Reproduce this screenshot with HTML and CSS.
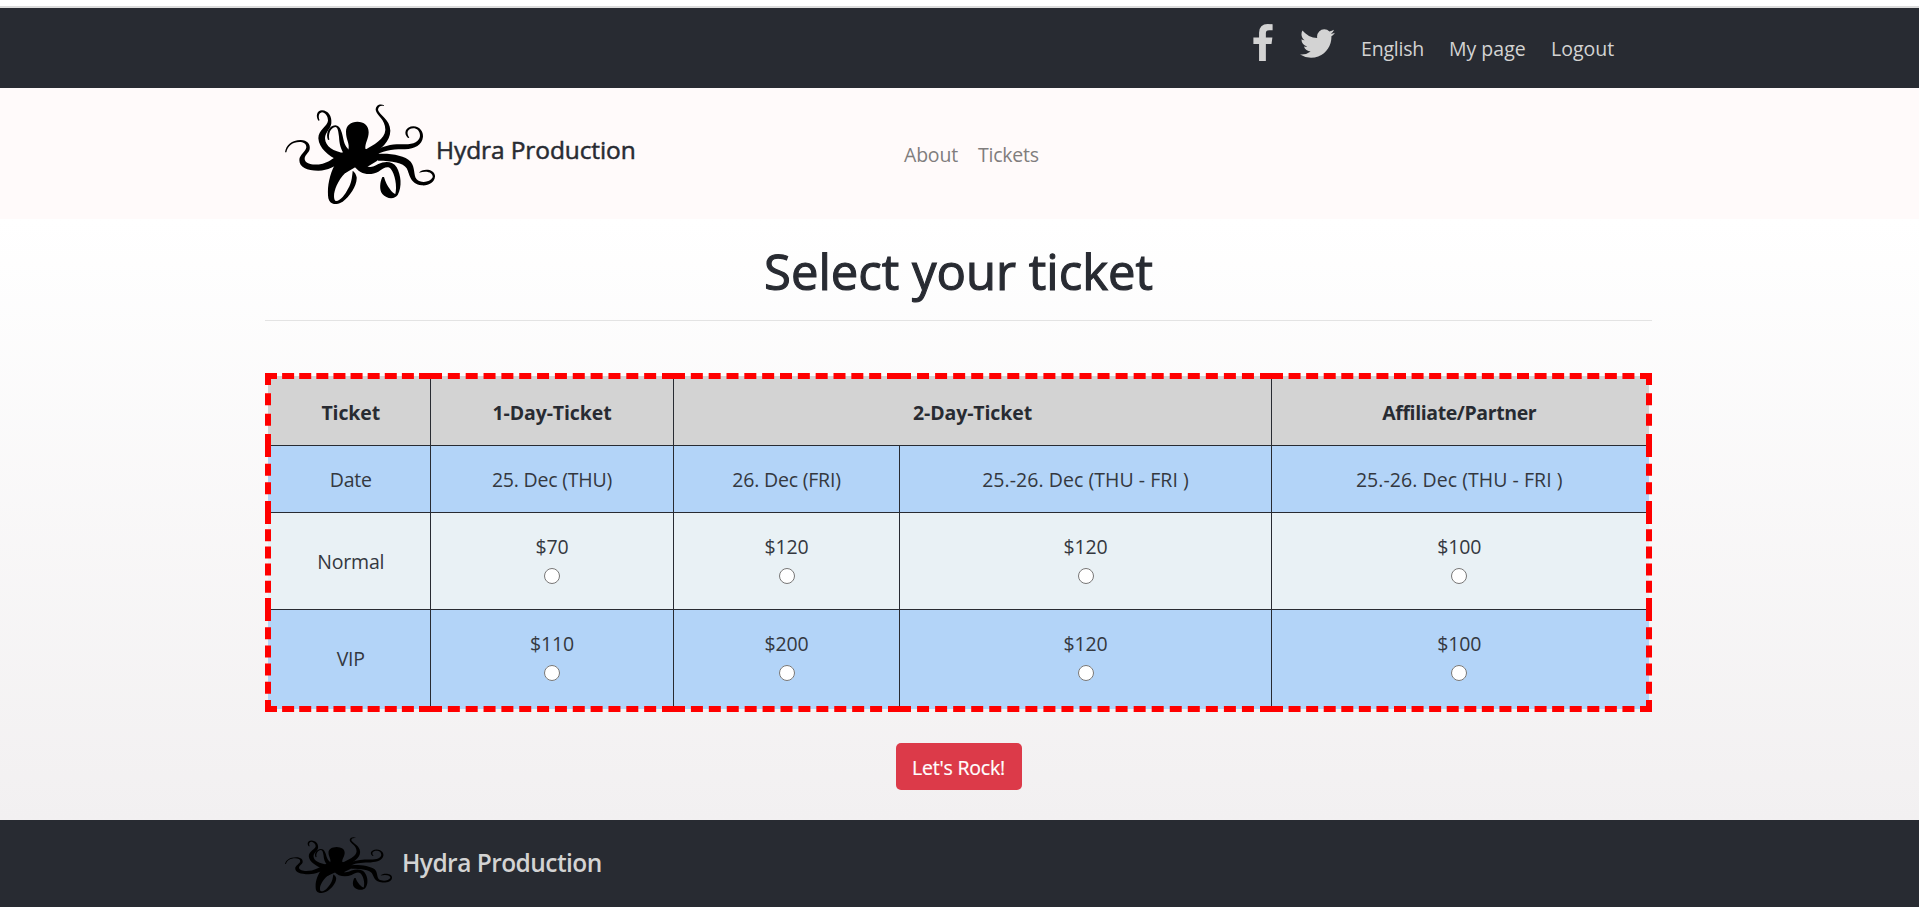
FILE: index.html
```html
<!DOCTYPE html>
<html lang="en">
<head>
<meta charset="utf-8">
<title>Hydra Production</title>
<link rel="stylesheet" href="styles.css">
</head>
<body>
<svg class="defs" aria-hidden="true">
  <symbol id="octopus" viewBox="45 42 450 300" preserveAspectRatio="none">
    <path d="M228 125C228 105 243 96 262 95C282 96 296 105 296 127C296 147 285 158 286 176L325 190L322 212L290 232L250 228L225 250L195 225L200 195L235 180C240 160 228 150 228 125Z"/>
    <path d="M45 187C48 165 65 150 92 150C112 150 122 163 119 178C116 190 103 195 104 208C107 225 135 226 158 221C175 217 185 208 205 195L215 215C195 228 175 241 145 242C110 242 88 232 88 210C88 195 108 185 109 172C109 160 100 156 88 156C68 156 53 167 49 187Z"/>
    <path d="M145 92C136 78 141 61 156 61C175 62 186 78 184 100C182 118 166 125 165 145C166 170 190 185 225 190L205 212C175 197 147 175 145 145C145 118 172 110 174 92C174 78 165 68 156 67C146 69 144 80 149 91Z"/>
    <path d="M174 150C166 132 176 107 196 106C213 107 216 130 222 155C226 170 235 178 245 185L225 195C212 180 208 160 207 140C205 122 203 112 196 111C182 114 174 130 178 149Z"/>
    <path d="M342 46C332 40 317 44 317 60C320 78 347 88 346 120C345 148 310 165 285 180L300 200C335 175 360 155 361 122C360 88 328 75 324 60C324 49 333 45 342 48Z"/>
    <path d="M414 144C398 130 408 109 430 109C450 110 460 125 459 140C456 165 435 176 405 178C380 178 345 178 320 195L305 190C340 163 375 162 400 163C430 164 448 155 450 138C450 122 440 115 430 115C414 115 407 128 418 143Z"/>
    <path d="M300 195C340 187 400 192 422 215C436 232 430 255 440 268C452 280 480 278 488 262C490 250 475 240 447 248C455 236 492 234 495 257C496 278 475 288 455 286C420 282 420 255 410 235C400 218 365 212 325 212Z"/>
    <path d="M250 225C270 255 300 258 325 245C340 235 352 226 362 236C375 250 382 290 376 312C368 310 350 290 342 261L337 261C330 275 327 300 337 312C350 328 375 328 383 315C397 290 393 255 380 232C368 213 345 213 325 222C310 230 300 235 290 228Z"/>
    <path d="M200 215C180 245 170 290 175 325C180 346 200 346 218 335C240 320 262 285 260 262C258 250 250 243 248 243C246 265 244 280 235 295C225 315 210 335 197 333C185 325 195 280 225 250L262 228Z"/>
  </symbol>
</svg>

<div class="topbar">
  <nav class="topbar-nav">
    <a class="social" href="#" aria-label="Facebook"><svg class="icon-fb" viewBox="95 0 864 1664"><path d="M959 12v264h-157q-86 0-116 36t-30 108v189h293l-39 296h-254v759h-306v-759h-255v-296h255v-218q0-186 104-288.500t277-102.500q147 0 228 12z"/></svg></a>
    <a class="social social-tw" href="#" aria-label="Twitter"><svg class="icon-tw" viewBox="44 256 1576 1280"><path d="M1620 408q-67 98-162 167 1 14 1 42 0 130-38 259.500t-115.500 248.500-184.500 210.500-258 146-323 54.500q-271 0-496-145 35 4 78 4 225 0 401-138-105-2-188-64.500t-114-159.500q33 5 61 5 43 0 85-11-112-23-185.500-111.500t-73.500-205.500v-4q68 38 146 41-66-44-105-115t-39-154q0-88 44-163 121 149 294.500 238.500t371.500 99.500q-8-38-8-74 0-134 94.500-228.500t228.500-94.500q140 0 236 102 109-21 205-78-37 115-142 178 93-10 186-50z"/></svg></a>
    <a class="link-lang" href="#">English</a>
    <a class="link-page" href="#">My page</a>
    <a class="link-out" href="#">Logout</a>
  </nav>
</div>

<header class="mainbar">
  <a class="brand" href="#"><svg class="logo"><use href="#octopus"/></svg><span>Hydra Production</span></a>
  <nav class="menu"><a class="menu-about" href="#">About</a><a href="#">Tickets</a></nav>
</header>

<main>
  <h1>Select your ticket</h1>
  <hr>
  <table>
    <colgroup><col class="c1"><col class="c2"><col class="c3"><col class="c4"><col class="c5"></colgroup>
    <tr class="head"><th>Ticket</th><th>1-Day-Ticket</th><th colspan="2">2-Day-Ticket</th><th class="partner">Affiliate/Partner</th></tr>
    <tr class="blue date"><td>Date</td><td>25. Dec (THU)</td><td>26. Dec (FRI)</td><td class="range">25.-26. Dec (THU - FRI )</td><td class="range">25.-26. Dec (THU - FRI )</td></tr>
    <tr class="pale price"><td>Normal</td><td>$70<input type="radio" name="ticket"></td><td>$120<input type="radio" name="ticket"></td><td>$120<input type="radio" name="ticket"></td><td>$100<input type="radio" name="ticket"></td></tr>
    <tr class="blue price last"><td>VIP</td><td>$110<input type="radio" name="ticket"></td><td>$200<input type="radio" name="ticket"></td><td>$120<input type="radio" name="ticket"></td><td>$100<input type="radio" name="ticket"></td></tr>
  </table>
  <button type="button">Let's Rock!</button>
</main>

<footer>
  <svg class="logo-small"><use href="#octopus"/></svg><span>Hydra Production</span>
</footer>
</body>
</html>
```

FILE: styles.css
```css
* { box-sizing: border-box; }
body {
  margin: 0;
  height: 907px;
  display: flex;
  flex-direction: column;
  overflow: hidden;
  font-family: "Open Sans", "Noto Sans", sans-serif;
  font-size: 19.5px;
  line-height: 30px;
  letter-spacing: -0.2px;
  color: #282b32;
  background: #fff;
}
a { color: inherit; text-decoration: none; white-space: nowrap; }
.defs { position: absolute; width: 0; height: 0; }

.topbar {
  flex: none;
  height: 82px;
  margin-top: 6px;
  border-top: 2px solid #dcdcdc;
  background: #282b32;
  color: #d3d3d3;
}
.topbar-nav { display: flex; padding: 16px 0 0 1253px; }
.topbar-nav svg { display: block; fill: #d3d3d3; }
.icon-fb { width: 20px; height: 37px; }
.icon-tw { width: 35px; height: 29px; margin-top: 5px; }
.social { width: 47px; }
.social-tw { width: 61px; }
.link-lang, .link-page, .link-out { padding-top: 10px; }
.link-lang { width: 88px; }
.link-page { width: 102px; letter-spacing: 0; }
.link-out { letter-spacing: 0; }

.mainbar {
  flex: none;
  display: flex;
  height: 131px;
  padding: 16px 0 0 285px;
  background: #fffafa;
}
.brand { display: flex; width: 619px; font-size: 24.5px; letter-spacing: -0.1px; }
.brand span { padding-top: 31px; -webkit-text-stroke: 0.5px #282b32; }
.logo { width: 150px; height: 100px; margin-right: 1px; }
.menu { display: flex; gap: 20px; padding-top: 36px; color: #807d7d; }

main {
  flex: none;
  height: 601px;
  padding: 22px 267px 0 265px;
  background: linear-gradient(#fff, #f2f0f1);
  text-align: center;
}
h1 {
  margin: 0;
  font-size: 49px;
  font-weight: 400;
  line-height: 60px;
  letter-spacing: 0;
  -webkit-text-stroke: 1.1px #282b32;
}
hr { height: 1px; margin: 19px 0 52px; border: 0; background: #e3e3e3; }

table {
  width: 1387px;
  height: 338px;
  table-layout: fixed;
  border-collapse: collapse;
  border: 6px dashed #f00;
}
.c1 { width: 162px; }
.c2 { width: 243px; }
.c3 { width: 226px; }
.c4 { width: 372px; }
th, td { padding: 0; border: 1px solid #282b32; }
td { padding: 2px 0 0 1px; color: #34383f; }
.head { height: 69px; background: #d3d3d3; }
.date { height: 67px; }
.price { height: 97px; }
.last { height: 100px; }
.blue { background: #b3d4f8; }
.pale { background: #e9f1f5; }
.range { letter-spacing: 0.05px; }
th { padding: 2px 0 0 1px; font-weight: 700; letter-spacing: -0.1px; }
.partner { letter-spacing: -0.4px; }
input { display: block; width: 16px; height: 16px; margin: 6px auto 7px; }

button {
  width: 126px;
  height: 47px;
  margin-top: 31px;
  padding: 2px 0 0;
  border: 0;
  border-radius: 5px;
  background: #dc3a49;
  color: #fff;
  font: inherit;
  letter-spacing: inherit;
  -webkit-text-stroke: 0.2px #fff;
}

footer {
  flex: none;
  display: flex;
  height: 87px;
  padding: 17px 0 0 285px;
  background: #282b32;
  color: #d3d3d3;
  font-size: 24.5px;
  font-weight: 600;
  letter-spacing: -0.55px;
}
.logo-small { width: 107px; height: 56px; margin-right: 10px; }
footer span { padding-top: 11px; }
```
